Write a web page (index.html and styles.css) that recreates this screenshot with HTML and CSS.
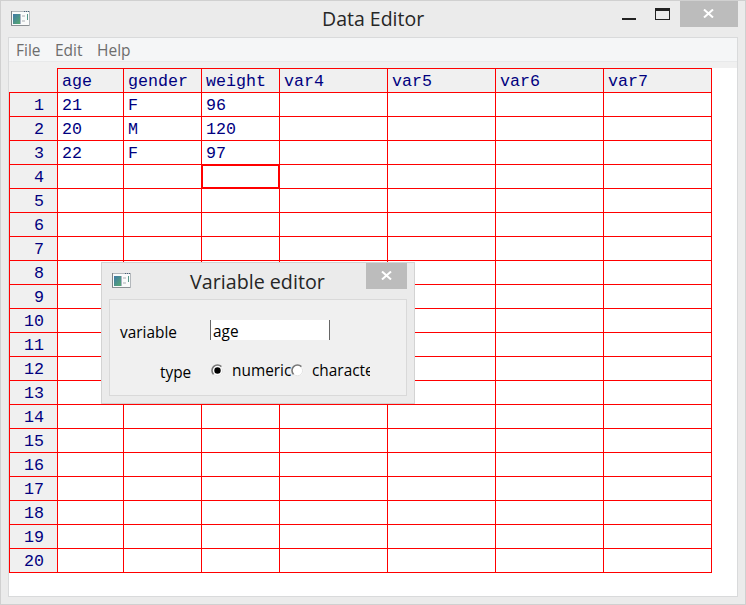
FILE: index.html
```html
<!DOCTYPE html>
<html lang="en">
<head>
<meta charset="utf-8">
<title>Data Editor</title>
<link rel="stylesheet" href="styles.css">
</head>
<body>
<svg class="defs" width="0" height="0" aria-hidden="true">
  <defs>
    <linearGradient id="pane" x1="0" y1="0" x2="1" y2="1">
      <stop offset="0" stop-color="#3f78a8"/>
      <stop offset="1" stop-color="#58ad6c"/>
    </linearGradient>
    <symbol id="app" viewBox="0 0 19 16">
      <path d="M0 0h19v15H0z" fill="#b4b8bc"/>
      <path d="M0 0h1v15H0z" fill="#7d8388"/>
      <path d="M0 14h18v1H0z" fill="#8b9094"/>
      <path d="M1 1h17v13H1z" fill="#fafbfb"/>
      <path d="M2 3h8v10H2z" fill="url(#pane)"/>
      <path d="M9 3h1v10H9z" fill="#aab6c4"/>
      <path d="M11 4h3v2h-3zM11 9h3v2h-3z" fill="#d3d5d7"/>
      <path d="M16 3h1v6h-1z" fill="#559688"/>
      <path d="M13 0h1v1h-1zM15 0h1v1h-1zM17 0h1v1h-1z" fill="#47627a"/>
    </symbol>
    <symbol id="cross" viewBox="0 0 11 9">
      <path d="M1 .5l9 8M10 .5l-9 8" stroke="#fff" stroke-width="2" fill="none"/>
    </symbol>
    <symbol id="ring" viewBox="0 0 13 13">
      <circle cx="6.5" cy="6.5" r="5.8" fill="#fff"/>
      <path d="M2.6 10.4A5.5 5.5 0 0 1 10.4 2.6" stroke="#777" stroke-width="1.6" fill="none"/>
      <path d="M10.2 3.2A4.9 4.9 0 0 1 2.8 10.2" stroke="#e3e3e3" fill="none"/>
    </symbol>
  </defs>
</svg>
<div class="window">
  <header class="titlebar">
    <svg class="app-icon" width="19" height="16"><use href="#app"/></svg>
    <h1 class="title">Data Editor</h1>
    <div class="controls">
      <span class="minimize"></span>
      <span class="maximize"></span>
      <span class="close"><svg width="11" height="9"><use href="#cross"/></svg></span>
    </div>
  </header>
  <main class="client">
    <nav class="menu"><span class="file">File</span><span class="edit">Edit</span><span class="help">Help</span></nav>
    <div class="strip"></div>
    <table class="sheet">
      <colgroup><col class="c-num"><col class="c-a"><col class="c-b"><col class="c-b"><col class="c-v"><col class="c-v"><col class="c-v"><col class="c-v"></colgroup>
      <thead><tr><th class="corner"></th><th>age</th><th>gender</th><th>weight</th><th>var4</th><th>var5</th><th>var6</th><th>var7</th></tr></thead>
      <tbody>
        <tr><th>1</th><td>21</td><td>F</td><td>96</td><td></td><td></td><td></td><td></td></tr>
        <tr><th>2</th><td>20</td><td>M</td><td>120</td><td></td><td></td><td></td><td></td></tr>
        <tr><th>3</th><td>22</td><td>F</td><td>97</td><td></td><td></td><td></td><td></td></tr>
        <tr><th>4</th><td></td><td></td><td class="active"></td><td></td><td></td><td></td><td></td></tr>
        <tr><th>5</th><td></td><td></td><td></td><td></td><td></td><td></td><td></td></tr>
        <tr><th>6</th><td></td><td></td><td></td><td></td><td></td><td></td><td></td></tr>
        <tr><th>7</th><td></td><td></td><td></td><td></td><td></td><td></td><td></td></tr>
        <tr><th>8</th><td></td><td></td><td></td><td></td><td></td><td></td><td></td></tr>
        <tr><th>9</th><td></td><td></td><td></td><td></td><td></td><td></td><td></td></tr>
        <tr><th>10</th><td></td><td></td><td></td><td></td><td></td><td></td><td></td></tr>
        <tr><th>11</th><td></td><td></td><td></td><td></td><td></td><td></td><td></td></tr>
        <tr><th>12</th><td></td><td></td><td></td><td></td><td></td><td></td><td></td></tr>
        <tr><th>13</th><td></td><td></td><td></td><td></td><td></td><td></td><td></td></tr>
        <tr><th>14</th><td></td><td></td><td></td><td></td><td></td><td></td><td></td></tr>
        <tr><th>15</th><td></td><td></td><td></td><td></td><td></td><td></td><td></td></tr>
        <tr><th>16</th><td></td><td></td><td></td><td></td><td></td><td></td><td></td></tr>
        <tr><th>17</th><td></td><td></td><td></td><td></td><td></td><td></td><td></td></tr>
        <tr><th>18</th><td></td><td></td><td></td><td></td><td></td><td></td><td></td></tr>
        <tr><th>19</th><td></td><td></td><td></td><td></td><td></td><td></td><td></td></tr>
        <tr><th>20</th><td></td><td></td><td></td><td></td><td></td><td></td><td></td></tr>
      </tbody>
    </table>
  </main>
</div>
<section class="dialog">
  <header class="dialog-bar">
    <svg class="app-icon" width="19" height="16"><use href="#app"/></svg>
    <h2 class="title">Variable editor</h2>
    <span class="close"><svg width="11" height="9"><use href="#cross"/></svg></span>
  </header>
  <div class="form">
    <div class="row name-row"><span class="label variable">variable</span><span class="field">age</span></div>
    <div class="row type-row">
      <span class="label type">type</span>
      <svg class="radio" width="13" height="13"><use href="#ring"/><circle cx="6.5" cy="6.5" r="3.2"/></svg>
      <span class="numeric">numeric</span>
      <svg class="radio" width="13" height="13"><use href="#ring"/></svg>
      <span class="character">character</span>
    </div>
  </div>
</section>
</body>
</html>
```
FILE: styles.css
```css
* { box-sizing: border-box; }
body { margin: 0; font-family: "Open Sans", "Noto Sans", sans-serif; background: #ebebeb; }
.defs { position: absolute; }
svg { display: block; flex: none; }
.window { width: 746px; height: 605px; border: 1px solid #d0d0d0; background: #ebebeb; padding: 0 7px 7px; overflow: hidden; }
.titlebar { display: flex; height: 36px; align-items: flex-start; justify-content: space-between; }
.app-icon { margin: 10px 0 0 3px; }
.title { margin: 0; font-weight: 400; color: #262626; white-space: nowrap; line-height: 26px; }
.titlebar .title { font-size: 19.5px; margin: 5px 0 0 auto; width: 103px; }
.controls { display: flex; margin-left: 197px; }
.minimize { width: 14px; height: 2px; background: #222; margin-top: 17px; }
.maximize { width: 15px; height: 12px; border: 1px solid #222; border-top-width: 3px; margin: 7px 10px 0 19px; }
.close { display: flex; align-items: center; justify-content: center; background: #bcbcbc; width: 58px; height: 26px; padding: 0 2px 2px 0; }
.client { height: 560px; border: 1px solid #d9dadb; background: #fff; }
.menu { display: flex; height: 23px; background: #f5f6f7; color: #6d6d6d; font-size: 15.5px; line-height: 25px; padding-left: 7px; }
.menu span { white-space: nowrap; }
.file { width: 39px; }
.edit { width: 42px; }
.strip { height: 7px; background: #f0f0f0; border-top: 1px solid #e8e9ea; }
.sheet { width: 703px; table-layout: fixed; border-collapse: separate; border-spacing: 0; color: #00007f; font: 16.67px/21px "Liberation Mono", monospace; }
.c-num { width: 49px; }
.c-a { width: 66px; }
.c-b { width: 78px; }
.c-v { width: 108px; }
th, td { height: 24px; padding: 2px 0 0 4px; border: solid #f00; border-width: 0 1px 1px 0; text-align: left; font-weight: 400; }
th { background: #f0f0f0; }
thead th { height: 25px; border-top-width: 1px; }
thead .corner { border-top: 0; }
tbody th { border-left-width: 1px; text-align: right; padding: 2px 13px 0 0; }
.active { box-shadow: inset 1px 1px #f00, inset -1px -1px #f00, -1px -1px #f00; }
.dialog { position: absolute; left: 101px; top: 262px; width: 314px; height: 142px; border: 1px solid #d3d3d3; background: #ebebeb; padding: 0 7px 7px; }
.dialog-bar { display: flex; height: 36px; }
.dialog-bar .title { font-size: 19.7px; margin: 5px 0 0 59px; width: 136px; line-height: 27px; }
.dialog-bar .close { width: 41px; margin-left: auto; padding-right: 0; }
.form { height: 97px; border: 1px solid #d9d9d9; background: #f0f0f0; color: #000; font-size: 15.4px; }
.row { display: flex; line-height: 22px; }
.name-row { padding: 20px 0 0 10px; height: 50px; }
.label { white-space: nowrap; }
.variable { width: 90px; padding-top: 2px; }
.field { width: 120px; height: 20px; background: #fff; border: solid #666; border-width: 0 1px; padding-left: 2px; line-height: 23px; }
.type-row { padding: 10px 0 0 50px; }
.type { width: 51px; padding-top: 2px; }
.radio { margin-top: 4px; }
.numeric { margin-left: 8px; width: 59px; white-space: nowrap; }
.character { margin-left: 8px; width: 58px; overflow: hidden; white-space: nowrap; }
```
